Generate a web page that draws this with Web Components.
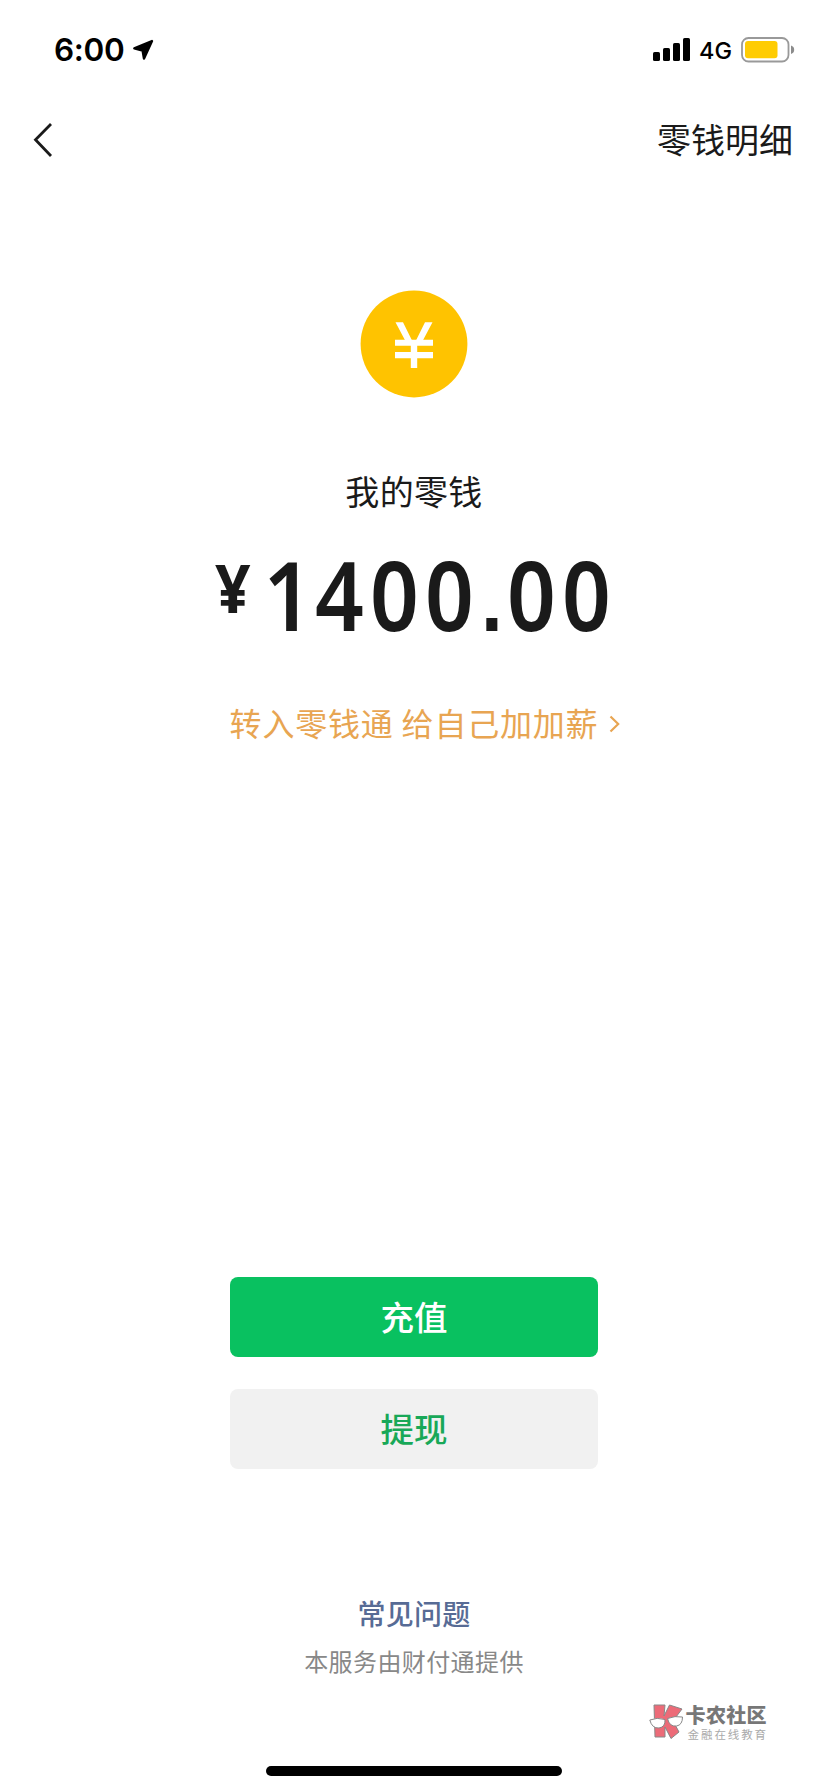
<!DOCTYPE html>
<html lang="zh-CN">
<head>
<meta charset="utf-8">
<title>我的零钱</title>
<style>
html,body{margin:0;background:#fff}
body{font-family:"Noto Sans CJK SC","Noto Sans",sans-serif;color:#1a1a1a}
</style>
</head>
<body>
<wallet-page></wallet-page>
<script>
const define = (name, html) => customElements.define(name, class extends HTMLElement {
  constructor() {
    super();
    const t = document.createElement('template');
    t.innerHTML = html;
    this.attachShadow({ mode: 'open' }).append(t.content.cloneNode(true));
  }
});

define('status-bar', `
<style>
:host{display:flex;justify-content:space-between;align-items:center;box-sizing:border-box;height:100px;padding:0 33px 0 54px;color:#000;font-family:Inter,sans-serif}
div{display:flex;align-items:center}
svg{display:block}
.time{font-size:31.5px;font-weight:600;line-height:40px;letter-spacing:-.3px}
.net{font-size:23.5px;font-weight:500;line-height:30px;margin:2px 9px 0 8px}
.loc{margin-left:7px}
</style>
<div><span class="time">6:00</span>
<svg class="loc" width="22" height="22" viewBox="0 0 22 22"><path d="M20 2 2.300 9.400 10.600 11.500 12 19.600Z" fill="#000" stroke="#000" stroke-width="2.400" stroke-linejoin="round"/></svg></div>
<div>
<svg width="38" height="24" viewBox="0 0 38 24"><rect x="0" y="14" width="7" height="9" rx="1.600"/><rect x="10" y="10" width="7" height="13" rx="1.600"/><rect x="20" y="5" width="7" height="18" rx="1.600"/><rect x="30" y="0" width="7" height="23" rx="1.600"/></svg>
<span class="net">4G</span>
<svg width="54" height="26" viewBox="0 0 54 26"><rect x="1" y="1" width="46.500" height="23.500" rx="6.500" fill="#fff" stroke="#999" stroke-width="1.800"/><rect x="4" y="4" width="32.500" height="17.300" rx="3" fill="#ffcc02"/><path d="M50 8.500Q53.200 9.500 53.200 12.700T50 17Z" fill="#8c8c8c"/></svg>
</div>`);

define('nav-bar', `
<style>
:host{display:flex;justify-content:space-between;align-items:center;height:80px;padding:0 35px 0 32px;font-size:34px}
svg{display:block}
span{margin-top:-4px}
</style>
<svg width="22" height="36" viewBox="0 0 22 36"><path d="M19 2 3.500 17.800 19 34" fill="none" stroke="#1a1a1a" stroke-width="2.800"/></svg>
<span><slot></slot></span>`);

define('coin-icon', `
<style>:host{display:block;width:108px;height:108px}svg{display:block}</style>
<svg width="108" height="108" viewBox="0 0 108 108"><circle cx="54" cy="54" r="53.400" fill="#ffc300"/><g fill="#fff"><path d="M35.500 32.300H43L54 54.500 65 32.300H72.500L61 54H47Z"/><path d="M35 49.800H73V55.800H35ZM35 62H73V68.300H35ZM50.800 52H57.200V78H50.800Z"/></g></svg>`);

define('balance-amount', `
<style>
:host{display:flex;align-items:flex-start;align-self:stretch;height:100px;padding-left:215px;font-family:"Noto Sans",sans-serif;font-weight:600;line-height:100px;white-space:nowrap}
.cur{font-size:67px;font-weight:700;width:45.300px;margin-top:-7px;transform:scaleX(.93);transform-origin:0 50%}
.num{font-size:96px;letter-spacing:6.900px;transform:scaleX(.89);transform-origin:0 50%}
.lead{position:relative;left:4px}
.dot{display:inline-block;width:30.300px;font:700 88px/100px "Liberation Sans",sans-serif;letter-spacing:0;text-indent:1px}
</style>
<span class="cur">¥</span><span class="num"><span class="lead">1</span>400<span class="dot">.</span>00</span>`);

define('promo-link', `
<style>
:host{display:flex;align-items:center;height:48px;font-size:32px;letter-spacing:.800px;color:#e8a552;white-space:nowrap}
svg{display:block;margin:3px 0 0 10px}
</style>
<slot></slot>
<svg width="14" height="20" viewBox="0 0 14 20"><path d="M2.500 2.500 10.200 10 2.500 17.500" fill="none" stroke="#e8a552" stroke-width="2.200"/></svg>`);

define('action-button', `
<style>
:host{display:flex;align-items:center;justify-content:center;box-sizing:border-box;width:368px;height:80px;padding-bottom:4px;border-radius:8px;background:#f1f1f1;color:#18a858;font-size:33.500px;font-weight:500}
:host([primary]){background:#09c160;color:#fff}
</style><slot></slot>`);

define('community-mark', `
<style>
:host{display:flex;height:38px}
svg{display:block}
div{display:flex;flex-direction:column;margin-left:2px}
b{font-size:20px;font-weight:900;line-height:22px;color:#777;letter-spacing:.3px}
span{font-size:11.500px;line-height:16px;color:#aaa;letter-spacing:1.900px;margin:0 0 0 2px}
</style>
<svg width="35" height="38" viewBox="0 0 35 38"><g stroke="#888" stroke-width="1"><path d="M5 1H16L15 12 20.500 1 33 5 24 17 30 28 22 34.500 16 23V33H6Z" fill="#ec6b78"/><path d="M.8 16Q8 13 16 15.500 16.500 23 10 24 3 24.500 .8 16ZM18.500 14.500Q26 11.500 33.500 13 33.500 21 27.500 22 20.500 23 18.500 14.500Z" fill="#fff"/></g></svg>
<div><b>卡农社区</b><span>金融在线教育</span></div>`);

define('home-indicator', `<style>:host{display:block;width:296px;height:10px;border-radius:5px;background:#000}</style>`);

define('wallet-page', `
<style>
:host{display:flex;flex-direction:column;align-items:center;height:1792px;overflow:hidden}
status-bar,nav-bar{align-self:stretch}
coin-icon{margin-top:110px}
.label{font-size:34px;line-height:50px;letter-spacing:.350px;margin-top:68px}
balance-amount{margin-top:28px}
promo-link{margin:54px 0 0 24px}
.actions{display:flex;flex-direction:column;gap:32px;margin-top:531px}
.faq{font-size:28px;font-weight:500;line-height:40px;letter-spacing:.200px;color:#576b95;margin-top:124px}
.by{font-size:24px;line-height:36px;letter-spacing:.400px;color:#888;margin-top:10px}
community-mark{align-self:flex-end;margin:25px 60px 0 0}
home-indicator{margin-top:24px}
</style>
<status-bar></status-bar>
<nav-bar>零钱明细</nav-bar>
<coin-icon></coin-icon>
<div class="label">我的零钱</div>
<balance-amount></balance-amount>
<promo-link>转入零钱通 给自己加加薪</promo-link>
<div class="actions"><action-button primary>充值</action-button><action-button>提现</action-button></div>
<div class="faq">常见问题</div>
<div class="by">本服务由财付通提供</div>
<community-mark></community-mark>
<home-indicator></home-indicator>`);
</script>
</body>
</html>
